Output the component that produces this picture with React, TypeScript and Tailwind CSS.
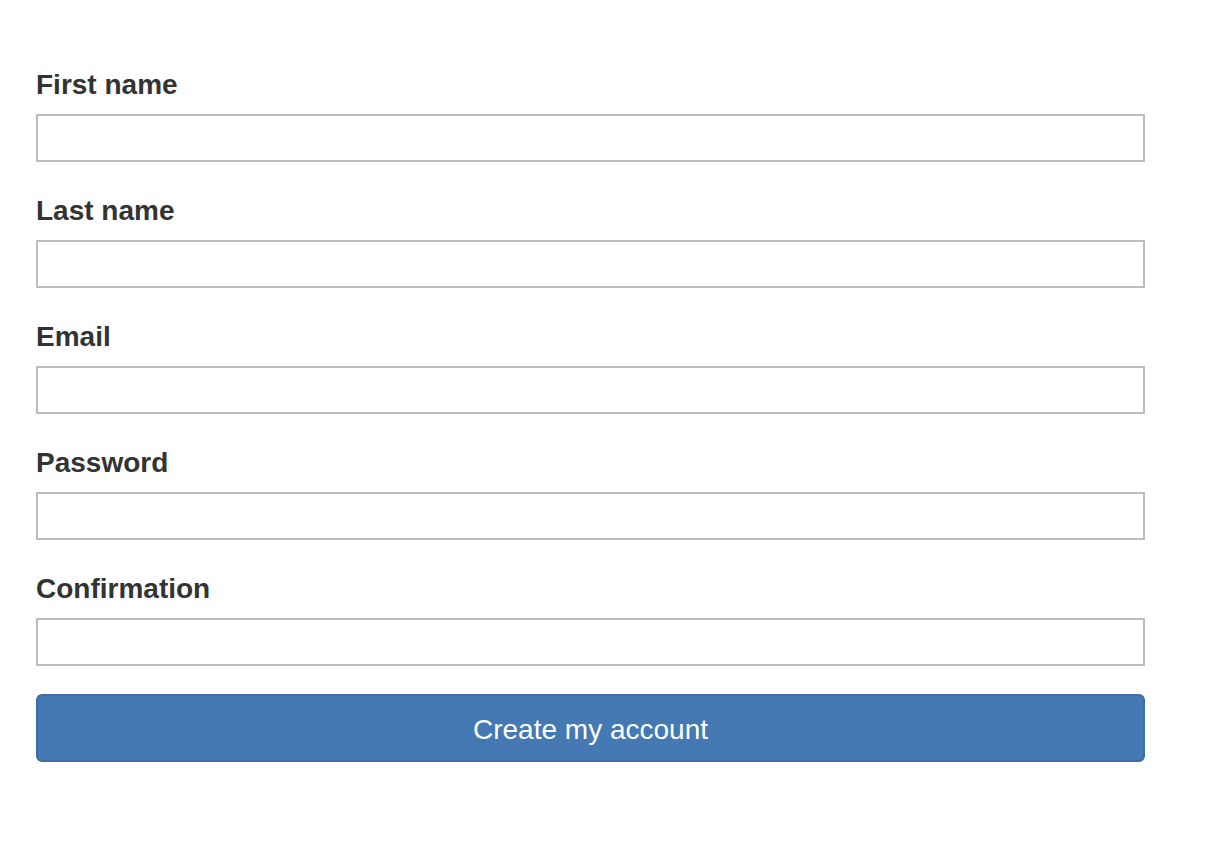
export default function App() {
  const fields = ["First name", "Last name", "Email", "Password", "Confirmation"];
  return (
    <div className="min-h-screen bg-white pt-[66px] pl-[36px] font-['Liberation_Sans',Arial,sans-serif] text-[#333]">
      <form className="w-[1109px] flex flex-col">
        {fields.map((f, i) => (
          <div key={f} className={i === 0 ? "" : "mt-[30px]"}>
            <label className="block text-[28px] leading-[37px] font-bold mb-[11px]">{f}</label>
            <input
              type={f === "Password" || f === "Confirmation" ? "password" : "text"}
              className="block w-full h-[48px] border-2 border-[#bdbdbd] bg-white outline-none"
            />
          </div>
        ))}
        <button
          type="button"
          className="mt-[28px] h-[68px] w-full rounded-[6px] border-2 border-[#3b6ea5] bg-[#4479b3] text-white text-[28px] leading-none pt-[3px]"
        >
          Create my account
        </button>
      </form>
    </div>
  );
}
